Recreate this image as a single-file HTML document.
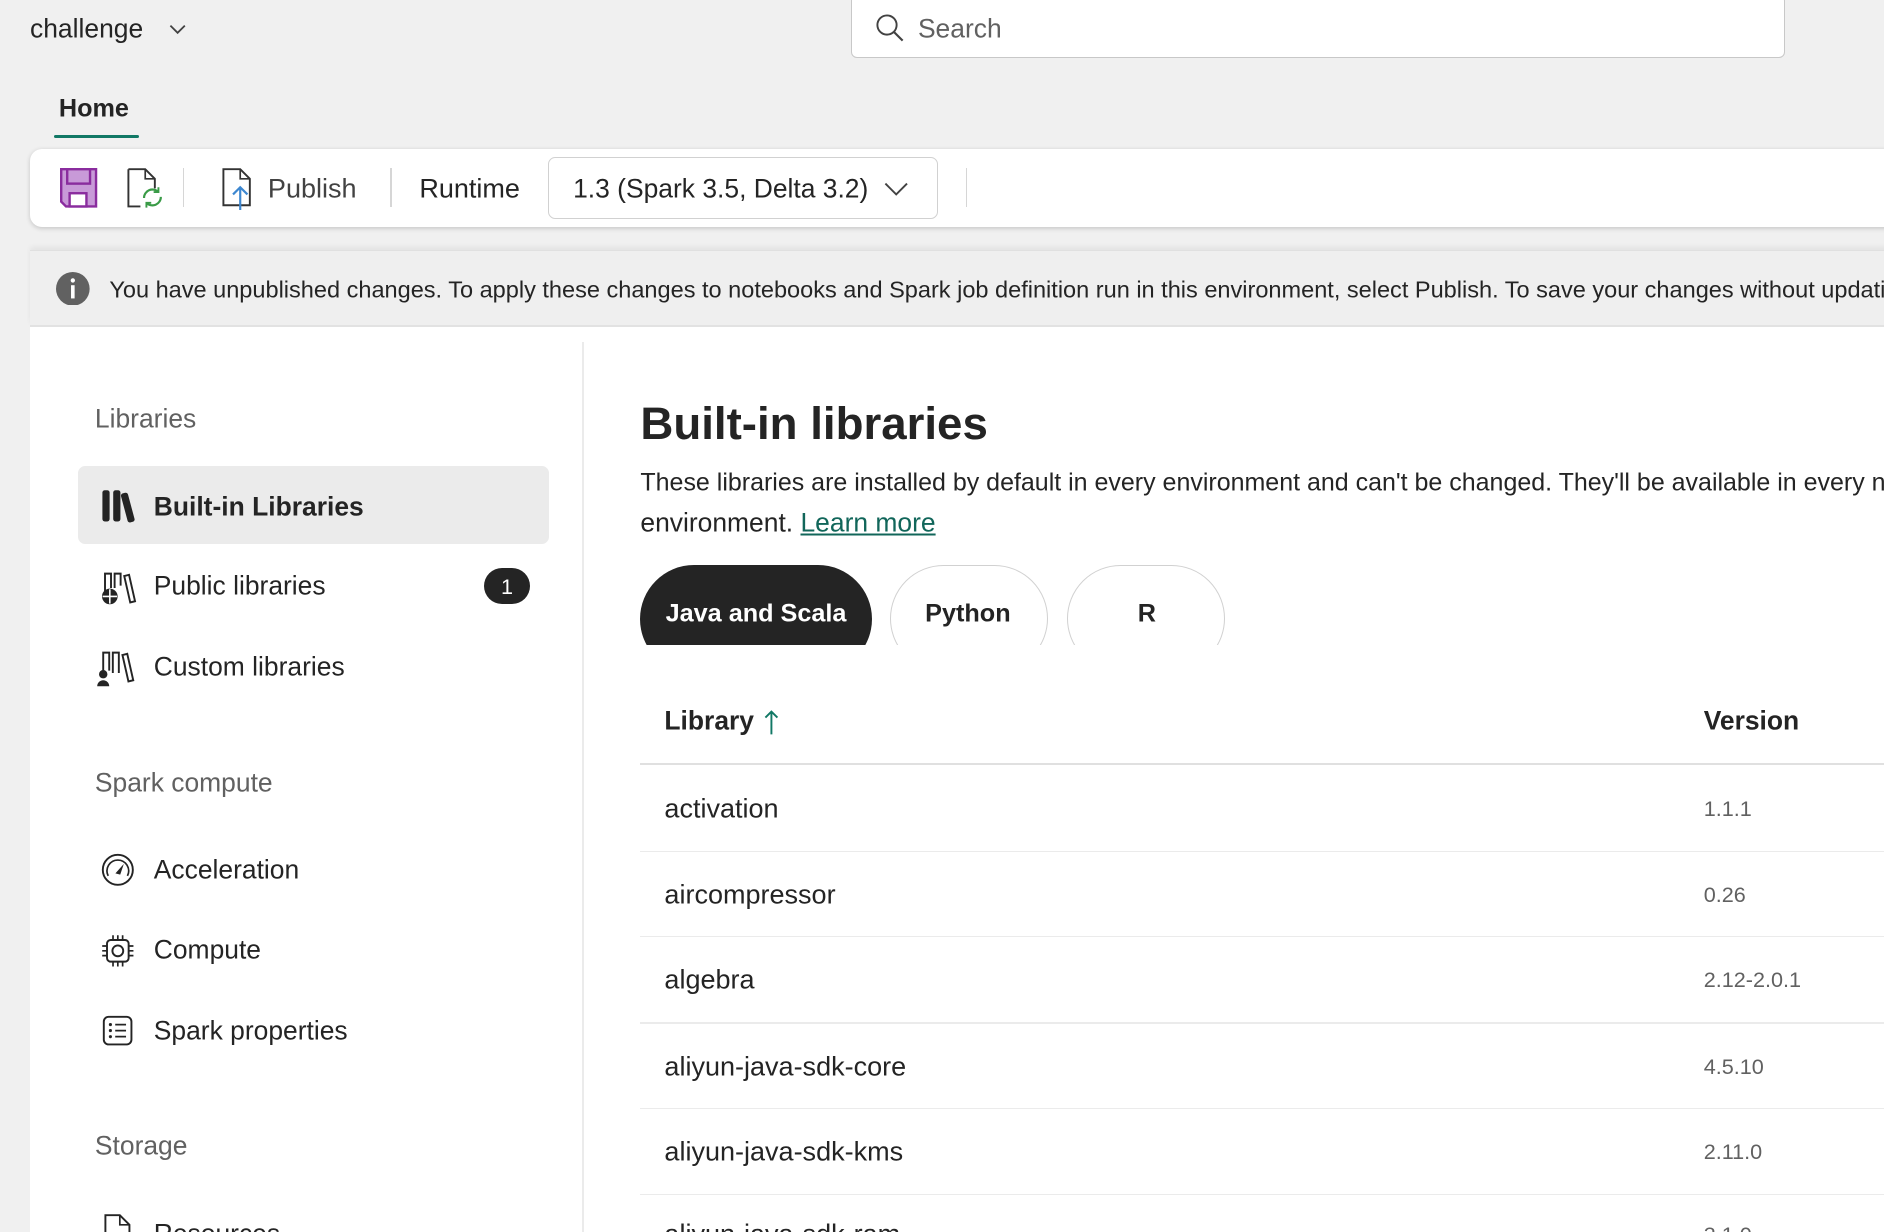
<!DOCTYPE html>
<html><head><meta charset="utf-8">
<style>
html,body{margin:0;padding:0;width:1884px;height:1232px;overflow:hidden;background:#f0f0f0;}
#w{position:absolute;left:0;top:0;width:1568px;height:1025px;zoom:1.2015;font-family:"Liberation Sans",sans-serif;color:#242424;overflow:hidden;background:#f0f0f0;}
.a{position:absolute;white-space:nowrap;}
.c{transform:translateY(-50%);}
.sep{position:absolute;width:1px;background:#d6d6d6;}
.row{position:absolute;left:533px;width:1100px;height:1px;background:#ebebeb;}
.nm{position:absolute;left:553px;font-size:22.5px;transform:translateY(-50%);white-space:nowrap;}
.vr{position:absolute;left:1418px;font-size:18px;color:#616161;transform:translateY(-50%);white-space:nowrap;}
.si{position:absolute;left:128px;font-size:22px;transform:translateY(-50%);white-space:nowrap;}
.sh{position:absolute;left:79px;font-size:22px;color:#616161;transform:translateY(-50%);white-space:nowrap;}
</style></head><body><div id="w">
<div class="a c" style="left:25px;top:24px;font-size:22px;">challenge</div>
<svg class="a" style="left:140px;top:18px" width="16" height="12"><path d="M2 3l6 6 6-6" fill="none" stroke="#424242" stroke-width="1.5"/></svg>
<div class="a" style="left:708px;top:-4px;width:776px;height:51px;background:#fff;border:1px solid #c8c8c8;border-radius:5px;"></div>
<svg class="a" style="left:728px;top:11px" width="26" height="26"><circle cx="10" cy="10" r="8" fill="none" stroke="#424242" stroke-width="1.6"/><path d="M16 16l7 7" stroke="#424242" stroke-width="1.8"/></svg>
<div class="a c" style="left:764px;top:24px;font-size:22px;color:#616161;">Search</div>
<div class="a c" style="left:49px;top:91px;font-size:21px;font-weight:bold;">Home</div>
<div class="a" style="left:45px;top:112px;width:71px;height:3px;background:#117865;border-radius:2px;"></div>

<div class="a" style="left:25px;top:124px;width:1600px;height:65px;background:#fff;border-radius:10px;box-shadow:0 1px 4px rgba(0,0,0,.18);"></div>
<svg class="a" style="left:50px;top:140px" width="32" height="33"><path d="M1 1h29v31H5l-4-4z" fill="#c89ad8" stroke="#8a2c9e" stroke-width="2"/><rect x="6" y="1" width="19" height="12" fill="#c89ad8" stroke="#8a2c9e" stroke-width="2"/><rect x="8" y="21" width="14" height="11" fill="#fff" stroke="#8a2c9e" stroke-width="2"/></svg>
<svg class="a" style="left:105px;top:140px" width="34" height="34"><path d="M2 1h14l8 8v8M2 1v31h10" fill="none" stroke="#333" stroke-width="1.6"/><path d="M16 1v8h8" fill="none" stroke="#333" stroke-width="1.4"/><path d="M15 25a7 7 0 0 1 12-5M29 24a7 7 0 0 1-12 5" fill="none" stroke="#3a9b47" stroke-width="1.8"/><path d="M27 16v4h-4M17 33v-4h4" fill="none" stroke="#3a9b47" stroke-width="1.6"/></svg>
<div class="sep" style="left:152px;top:140px;height:32px;"></div>
<svg class="a" style="left:184px;top:140px" width="30" height="36"><path d="M2 1h14l8 8v22H2z" fill="none" stroke="#333" stroke-width="1.6"/><path d="M16 1v8h8" fill="none" stroke="#333" stroke-width="1.4"/><path d="M16 35V16M10 22l6-6 6 6" fill="none" stroke="#3d87d0" stroke-width="1.8"/></svg>
<div class="a c" style="left:223px;top:157px;font-size:22.5px;color:#424242;">Publish</div>
<div class="sep" style="left:325px;top:140px;height:32px;"></div>
<div class="a c" style="left:349px;top:157px;font-size:22.5px;">Runtime</div>
<div class="a" style="left:456px;top:131px;width:323px;height:50px;border:1px solid #d1d1d1;border-radius:6px;"></div>
<div class="a c" style="left:477px;top:157px;font-size:22px;">1.3 (Spark 3.5, Delta 3.2)</div>
<svg class="a" style="left:735px;top:150px" width="22" height="14"><path d="M2 3l9 9 9-9" fill="none" stroke="#424242" stroke-width="1.6"/></svg>
<div class="sep" style="left:804px;top:140px;height:32px;"></div>

<div class="a" style="left:25px;top:208px;width:1600px;height:62px;background:#efefef;border-top:1px solid #e0e0e0;border-bottom:2px solid #e2e2e2;box-shadow:0 -3px 4px rgba(0,0,0,.05);"></div>
<svg class="a" style="left:47px;top:226px" width="28" height="28"><circle cx="14" cy="14" r="14" fill="#616161"/><rect x="12.5" y="11" width="3" height="11" fill="#fff"/><circle cx="14" cy="7" r="1.8" fill="#fff"/></svg>
<div class="a c" style="left:91px;top:241px;font-size:19.6px;">You have unpublished changes. To apply these changes to notebooks and Spark job definition run in this environment, select Publish. To save your changes without updating</div>

<div class="a" style="left:25px;top:272px;width:1600px;height:760px;background:#fff;"></div>
<div class="a" style="left:484px;top:285px;width:2px;height:745px;background:#ebebeb;"></div>

<div class="sh" style="top:349px;">Libraries</div>
<div class="a" style="left:65px;top:388px;width:392px;height:65px;background:#ebebeb;border-radius:6px;"></div>
<svg class="a" style="left:83px;top:407px" width="30" height="28"><rect x="2" y="1" width="6" height="26" rx="2" fill="#242424"/><rect x="11" y="1" width="6" height="26" rx="2" fill="#242424"/><rect x="20" y="3" width="6" height="25" rx="2" fill="#242424" transform="rotate(-15 23 15)"/></svg>
<div class="si" style="top:422px;font-weight:bold;">Built-in Libraries</div>
<svg class="a" style="left:82px;top:474px" width="32" height="30"><path d="M5 18V3h5v12M13 15V3h5v10M21 5l4-1 5 22-4 1z" fill="none" stroke="#242424" stroke-width="1.6"/><circle cx="9" cy="22" r="6.5" fill="#242424"/><path d="M3 22h12M9 16v12" stroke="#fff" stroke-width="1.3"/></svg>
<div class="si" style="top:488px;">Public libraries</div>
<div class="a" style="left:403px;top:473px;width:38px;height:30px;background:#242424;border-radius:15px;color:#fff;font-size:18px;text-align:center;line-height:32px;">1</div>
<svg class="a" style="left:80px;top:540px" width="34" height="32"><path d="M6 18V3h5v15M14 20V3h5v17M22 5l4-1 5 22-4 1z" fill="none" stroke="#242424" stroke-width="1.6"/><circle cx="6" cy="21" r="3.5" fill="#242424"/><path d="M1 31a5 5 0 0 1 10 0z" fill="#242424"/></svg>
<div class="si" style="top:555px;">Custom libraries</div>

<div class="sh" style="top:652px;">Spark compute</div>
<svg class="a" style="left:84px;top:710px" width="28" height="28"><circle cx="14" cy="14" r="12.5" fill="none" stroke="#242424" stroke-width="1.6"/><path d="M6 19A9 9 0 1 1 22 19" fill="none" stroke="#242424" stroke-width="1.4"/><path d="M12 17l7-8-3 9z" fill="#242424"/></svg>
<div class="si" style="top:724px;">Acceleration</div>
<svg class="a" style="left:84px;top:777px" width="28" height="28"><rect x="5" y="5" width="18" height="18" rx="3" fill="none" stroke="#242424" stroke-width="1.6"/><circle cx="14" cy="14" r="4.5" fill="none" stroke="#242424" stroke-width="1.6"/><path d="M10 1v4M14 1v4M18 1v4M10 23v4M14 23v4M18 23v4M1 10h4M1 14h4M1 18h4M23 10h4M23 14h4M23 18h4" stroke="#242424" stroke-width="1.4"/></svg>
<div class="si" style="top:791px;">Compute</div>
<svg class="a" style="left:85px;top:845px" width="26" height="26"><rect x="1.5" y="1.5" width="23" height="23" rx="4" fill="none" stroke="#242424" stroke-width="1.6"/><circle cx="7" cy="8" r="1.3" fill="#242424"/><circle cx="7" cy="13" r="1.3" fill="#242424"/><circle cx="7" cy="18" r="1.3" fill="#242424"/><path d="M11 8h9M11 13h9M11 18h9" stroke="#242424" stroke-width="1.5"/></svg>
<div class="si" style="top:858px;">Spark properties</div>
<div class="sh" style="top:954px;">Storage</div>
<svg class="a" style="left:86px;top:1010px" width="24" height="15"><path d="M2 15V1h12l8 8v6" fill="none" stroke="#242424" stroke-width="1.6"/><path d="M14 1v8h8" fill="none" stroke="#242424" stroke-width="1.4"/></svg>
<div class="si" style="top:1027px;">Resources</div>

<div class="a c" style="left:533px;top:353px;font-size:38px;font-weight:bold;">Built-in libraries</div>
<div class="a c" style="left:533px;top:402px;font-size:20.8px;">These libraries are installed by default in every environment and can't be changed. They'll be available in every notebook in this</div>
<div class="a c" style="left:533px;top:435px;font-size:22px;">environment. <span style="color:#11665a;text-decoration:underline;">Learn more</span></div>

<div class="a" style="left:533px;top:470px;width:600px;height:67px;overflow:hidden;">
 <div class="a" style="left:0;top:0;width:193px;height:90px;background:#242424;border-radius:45px;"></div>
 <div class="a" style="left:208px;top:0;width:130px;height:88px;border:1px solid #d1d1d1;border-radius:45px;"></div>
 <div class="a" style="left:355px;top:0;width:130px;height:88px;border:1px solid #d1d1d1;border-radius:45px;"></div>
 <div class="a c" style="left:21px;top:41px;font-size:21px;color:#fff;font-weight:bold;">Java and Scala</div>
 <div class="a c" style="left:237px;top:41px;font-size:21px;font-weight:bold;">Python</div>
 <div class="a c" style="left:414px;top:41px;font-size:21px;font-weight:bold;">R</div>
</div>

<div class="a c" style="left:553px;top:600px;font-size:22px;font-weight:bold;">Library</div>
<svg class="a" style="left:635px;top:589px" width="14" height="24"><path d="M7 22V3M2 8l5-5 5 5" fill="none" stroke="#117865" stroke-width="1.6"/></svg>
<div class="a c" style="left:1418px;top:600px;font-size:22px;font-weight:bold;">Version</div>
<div class="a" style="left:533px;top:635px;width:1100px;height:2px;background:#e0e0e0;"></div>

<div class="nm" style="top:673px;">activation</div><div class="vr" style="top:673px;">1.1.1</div>
<div class="row" style="top:708px;"></div>
<div class="nm" style="top:745px;">aircompressor</div><div class="vr" style="top:745px;">0.26</div>
<div class="row" style="top:779px;"></div>
<div class="nm" style="top:816px;">algebra</div><div class="vr" style="top:816px;">2.12-2.0.1</div>
<div class="row" style="top:851px;"></div>
<div class="nm" style="top:888px;">aliyun-java-sdk-core</div><div class="vr" style="top:888px;">4.5.10</div>
<div class="row" style="top:922px;"></div>
<div class="nm" style="top:959px;">aliyun-java-sdk-kms</div><div class="vr" style="top:959px;">2.11.0</div>
<div class="row" style="top:994px;"></div>
<div class="a" style="left:553px;top:1016px;font-size:22.5px;line-height:22px;height:9px;overflow:hidden;">aliyun-java-sdk-ram</div>
<div class="a" style="left:1418px;top:1019px;font-size:18px;line-height:18px;height:6px;overflow:hidden;color:#616161;">3.1.0</div>
</div></body></html>
